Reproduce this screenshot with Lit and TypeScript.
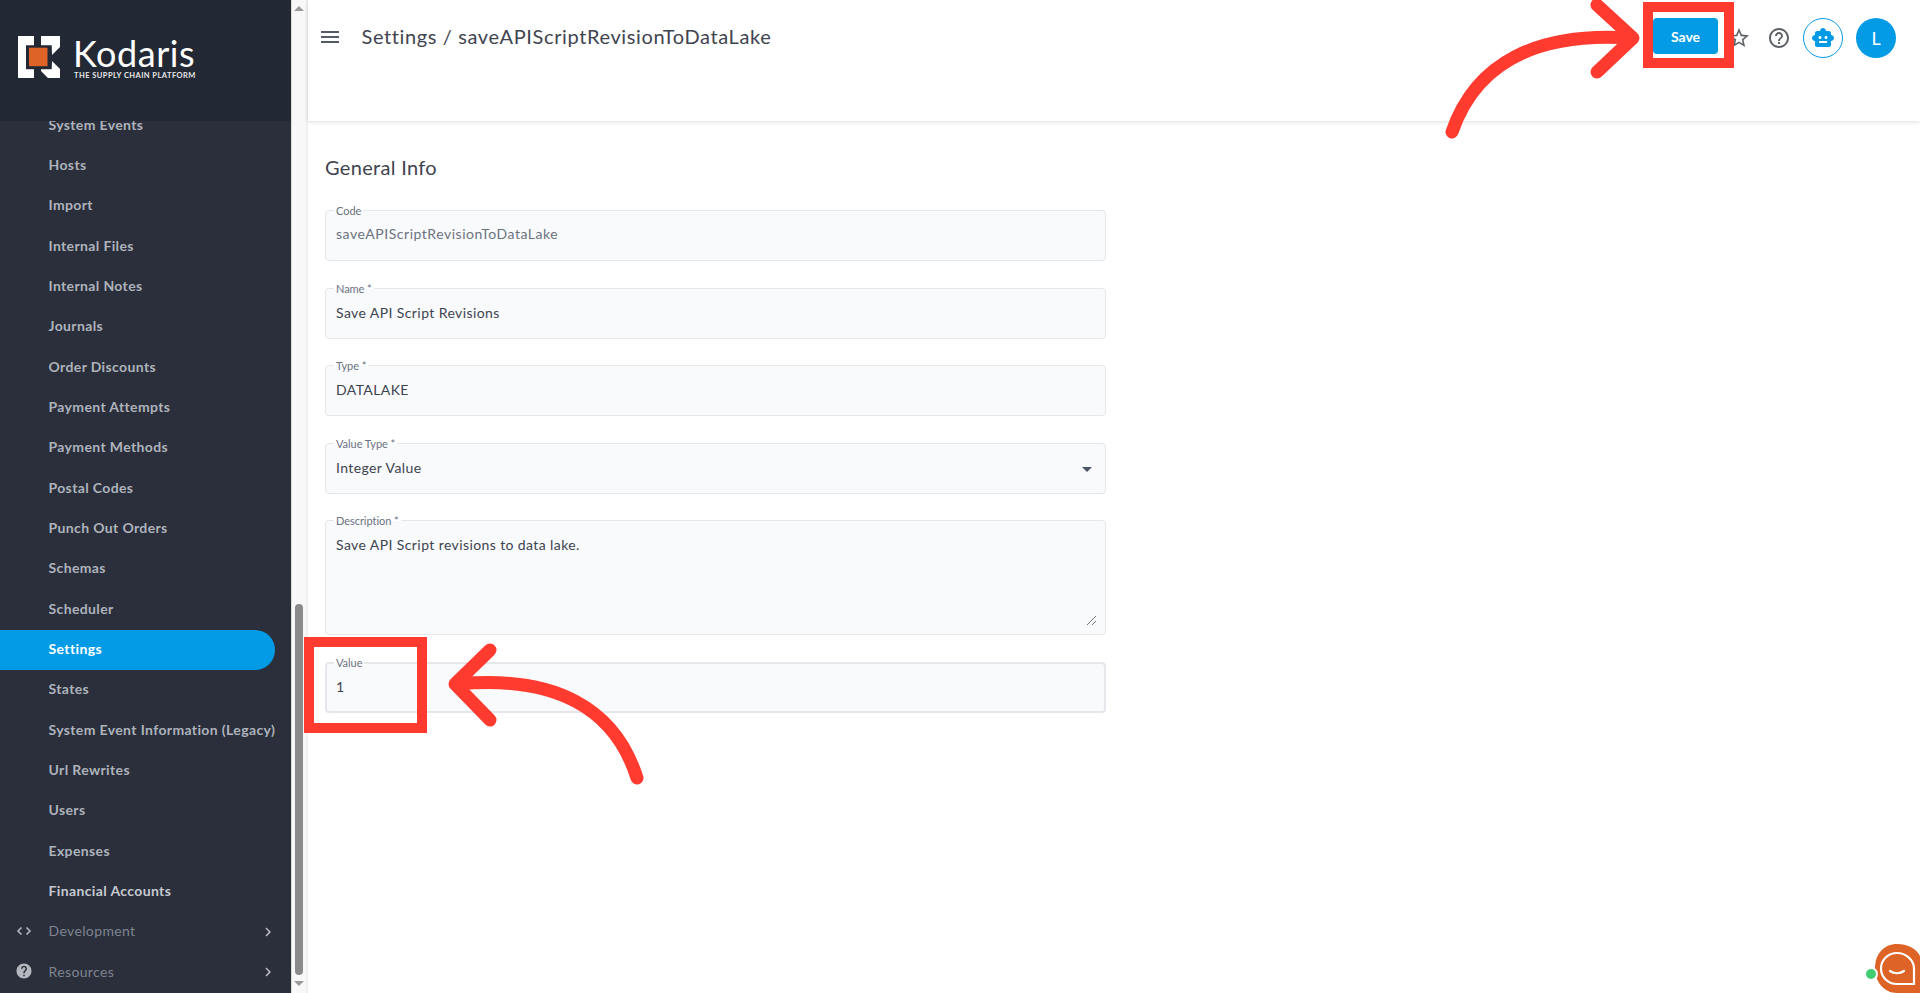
import { LitElement, html, css, svg } from "lit";
import { customElement } from "lit/decorators.js";

const NAV = ["System Events","Hosts","Import","Internal Files","Internal Notes","Journals","Order Discounts","Payment Attempts","Payment Methods","Postal Codes","Punch Out Orders","Schemas","Scheduler","Settings","States","System Event Information (Legacy)","Url Rewrites","Users","Expenses","Financial Accounts"];

const chevron = html`<svg class="chev" viewBox="0 0 24 24" width="18" height="18"><path fill="currentColor" d="M10 6 8.59 7.41 13.17 12l-4.58 4.59L10 18l6-6z"/></svg>`;

@customElement("app-root")
export class AppRoot extends LitElement {
  static styles = css`
    :host { display: block; height: 100vh; font-family: "Lato", "Noto Sans", sans-serif; color: #374151; }
    * { box-sizing: border-box; }
    .page { position: relative; display: flex; height: 993px; overflow: hidden; background: #fff; }
    .sidebar { width: 291px; flex: none; background: #2a2f3b; display: flex; flex-direction: column; overflow: hidden; }
    .brand { position: relative; z-index: 1; height: 121px; flex: none; background: #232934; display: flex; padding: 36px 0 0 18px; gap: 12px; }
    .brand-words { display: flex; flex-direction: column; color: #fff; margin-top: 0; }
    .brand-name { font-size: 36px; line-height: 34px; letter-spacing: 0.55px; font-weight: 400; }
    .brand-tag { font-size: 7.5px; line-height: 9px; font-weight: 700; letter-spacing: 0.45px; color: #e8e8e8; white-space: nowrap; margin: 1px 0 0 1px; }
    .nav { margin-top: -15.5px; display: flex; flex-direction: column; }
    .item { height: 40.33px; flex: none; display: flex; align-items: center; padding: 0 0 3px 48.5px; font-size: 14px; font-weight: 700; letter-spacing: .37px; color: #aeb3bb; white-space: nowrap; }
    .item.bright { color: #c6c9cf; }
    .item.active { width: 275px; background: #039be5; color: #fff; border-radius: 0 20px 20px 0; }
    .item.group { position: relative; color: #7f8490; font-weight: 400; padding-left: 0; }
    .gicon { width: 48.5px; padding-right: 1px; display: flex; justify-content: center; color: #b4b7bd; }
    .chev { position: absolute; left: 259px; top: 11px; color: #b9bcc2; }
    .gutter { width: 15px; flex: none; background: #f8f8f8; display: flex; flex-direction: column; align-items: center; border-left: 1px solid #dcdcdc; }
    .up { width: 0; height: 0; border: 5px solid transparent; border-top: 0; border-bottom: 5px solid #9a9a9a; margin-top: 6px; }
    .thumb { width: 8px; height: 371px; background: #8a8a8a; border-radius: 4px; margin-top: 593px; }
    .down { width: 0; height: 0; border: 5px solid transparent; border-bottom: 0; border-top: 5px solid #9a9a9a; margin-top: 6px; }
    .main { flex: 1; display: flex; flex-direction: column; min-width: 0; border-left: 2px solid #f0f0f0; }
    .top { height: 121px; flex: none; display: flex; padding: 18px 24px 0 8px; box-shadow: 0 1px 4px rgba(0,0,0,.14); background: #fff; align-items: flex-start; }
    .menu { width: 24px; height: 24px; margin: 7px 0 0 2px; color: #555b66; flex: none; }
    .title { font-size: 20px; line-height: 36px; color: #3f4450; margin-left: 19.5px; flex: 1; letter-spacing: .62px; white-space: nowrap; }
    .save { width: 65px; height: 36px; background: #039be5; color: #fff; border: 0; border-radius: 4px; font: 700 14px "Lato", sans-serif; padding: 0; }
    .ico { width: 24px; height: 24px; margin: 8px 0 0 16px; color: #5f6368; flex: none; }
    .ico.star { margin-left: 9px; }
    .bot { width: 40px; height: 40px; margin-left: 12px; border-radius: 50%; border: 1px solid #039be5; display: flex; align-items: center; justify-content: center; color: #039be5; flex: none; }
    .avatar { width: 40px; height: 40px; margin-left: 13px; border-radius: 50%; background: #039be5; color: #fff; display: flex; align-items: center; justify-content: center; font-size: 18px; flex: none; }
    .content { padding: 32px 0 0 17px; width: 798px; }
    h2 { margin: 0 0 29px; font-size: 20px; line-height: 28px; font-weight: 400; color: #3f4450; letter-spacing: .32px; }
    .fields { display: flex; flex-direction: column; gap: 26.5px; }
    .field { position: relative; height: 51px; background: #f9fafb; border: 1px solid #e5e7eb; border-radius: 4px; display: flex; align-items: center; padding: 0 10px 2px; font-size: 14px; letter-spacing: .4px; color: #3d4350; }
    .field.disabled { color: #6b7280; letter-spacing: .53px; padding-bottom: 4px; }
    .field.area { height: 115px; align-items: flex-start; padding-top: 15px; }
    .field.value { height: 51px; border-width: 2px; padding: 0 9px 2px; }
    .field.value label { left: 7px; top: -8px; }
    label { position: absolute; left: 8px; top: -7px; padding: 0 2px; font-size: 11px; line-height: 14px; letter-spacing: -.05px; color: #6b7280; background: linear-gradient(#fff 50%, #f9fafb 50%); }
    .caret { position: absolute; right: 13px; top: 23px; width: 0; height: 0; border: 5.5px solid transparent; border-bottom: 0; border-top: 5.5px solid #4b5563; }
    .grip { position: absolute; right: 9px; bottom: 9px; }
    .overlay { position: absolute; inset: 0; pointer-events: none; }
  `;

  field(label: string, value: string, cls = "", extra: unknown = "") {
    return html`<div class="field ${cls}"><label>${label}</label>${value}${extra}</div>`;
  }

  render() {
    return html`<div class="page">
      <aside class="sidebar">
        <div class="brand">
          <svg width="43" height="43" viewBox="19 37 43 43" style="flex:none">
            <path fill="#fff" d="M19 37h16v9.3h-8v24h8V79H19z"/>
            <path fill="#fff" d="M42 37h19v11l-8 8-.3-9.7H42zM42 70.300h10.700L53 62l8 8v9H49l-7-7z"/>
            <rect x="30" y="48.700" width="18.500" height="18.500" fill="#dd6326"/>
          </svg>
          <div class="brand-words"><span class="brand-name">Kodaris</span><span class="brand-tag">THE SUPPLY CHAIN PLATFORM</span></div>
        </div>
        <nav class="nav">
          ${NAV.map((n) => html`<div class="item ${n === "Settings" ? "active" : ""} ${n === "Financial Accounts" ? "bright" : ""}">${n}</div>`)}
          <div class="item group"><span class="gicon"><svg width="18" height="18" viewBox="0 0 18 18"><path d="M6.500 5.500 3 9l3.500 3.500M11.500 5.500 15 9l-3.500 3.500" fill="none" stroke="currentColor" stroke-width="1.600"/></svg></span>Development ${chevron}</div>
          <div class="item group"><span class="gicon"><svg width="18" height="18" viewBox="0 0 24 24"><path fill="currentColor" d="M12 2C6.480 2 2 6.480 2 12s4.480 10 10 10 10-4.480 10-10S17.520 2 12 2zm1 17h-2v-2h2v2zm2.070-7.750-.9.920C13.450 12.900 13 13.500 13 15h-2v-.5c0-1.100.45-2.100 1.170-2.830l1.240-1.260c.37-.36.59-.86.59-1.410 0-1.100-.9-2-2-2s-2 .9-2 2H8c0-2.210 1.790-4 4-4s4 1.790 4 4c0 .88-.36 1.680-.93 2.250z"/></svg></span>Resources ${chevron}</div>
        </nav>
      </aside>
      <div class="gutter"><div class="up"></div><div class="thumb"></div><div class="down"></div></div>
      <main class="main">
        <header class="top">
          <svg class="menu" viewBox="0 0 24 24"><path fill="currentColor" d="M3 18h18v-2H3v2zm0-5h18v-2H3v2zm0-7v2h18V6H3z"/></svg>
          <div class="title">Settings / saveAPIScriptRevisionToDataLake</div>
          <button class="save">Save</button>
          <svg class="ico star" viewBox="0 0 24 24"><path fill="currentColor" d="M22 9.240l-7.190-.62L12 2 9.190 8.630 2 9.240l5.460 4.730L5.820 21 12 17.270 18.180 21l-1.630-7.030L22 9.240zM12 15.400l-3.760 2.270 1-4.280-3.320-2.880 4.380-.38L12 6.100l1.710 4.040 4.380.38-3.320 2.880 1 4.280L12 15.400z"/></svg>
          <svg class="ico" viewBox="0 0 24 24"><path fill="currentColor" d="M11 18h2v-2h-2v2zm1-16C6.480 2 2 6.480 2 12s4.480 10 10 10 10-4.480 10-10S17.520 2 12 2zm0 18c-4.410 0-8-3.590-8-8s3.590-8 8-8 8 3.590 8 8-3.590 8-8 8zm0-14c-2.210 0-4 1.790-4 4h2c0-1.100.9-2 2-2s2 .9 2 2c0 2-3 1.750-3 5h2c0-2.250 3-2.500 3-5 0-2.210-1.790-4-4-4z"/></svg>
          <div class="bot"><svg width="24" height="24" viewBox="0 0 24 24"><path fill="currentColor" d="M20 9V7c0-1.100-.9-2-2-2h-3c0-1.660-1.340-3-3-3S9 3.340 9 5H6c-1.100 0-2 .9-2 2v2c-1.660 0-3 1.340-3 3s1.340 3 3 3v4c0 1.100.9 2 2 2h12c1.100 0 2-.9 2-2v-4c1.660 0 3-1.340 3-3s-1.340-3-3-3zM7.500 11.500c0-.83.67-1.500 1.500-1.500s1.500.67 1.500 1.500S9.830 13 9 13s-1.500-.67-1.500-1.500zM16 17H8v-2h8v2zm-1-4c-.83 0-1.500-.67-1.500-1.500S14.170 10 15 10s1.500.67 1.500 1.500S15.830 13 15 13z"/></svg></div>
          <div class="avatar">L</div>
        </header>
        <section class="content">
          <h2>General Info</h2>
          <div class="fields">
            ${this.field("Code", "saveAPIScriptRevisionToDataLake", "disabled")}
            ${this.field("Name *", "Save API Script Revisions")}
            ${this.field("Type *", "DATALAKE")}
            ${this.field("Value Type *", "Integer Value", "", html`<span class="caret"></span>`)}
            ${this.field("Description *", "Save API Script revisions to data lake.", "area", html`<svg class="grip" width="9" height="9" viewBox="0 0 9 9"><path d="M0 9 9 0M5 9l4-4" stroke="#777" stroke-width="1"/></svg>`)}
            ${this.field("Value", "1", "value")}
          </div>
        </section>
      </main>
      <svg class="overlay" width="1920" height="993" viewBox="0 0 1920 993">
        ${svg`
          <rect x="1648" y="7" width="81" height="56" fill="none" stroke="#ff3b30" stroke-width="10"/>
          <rect x="309" y="642" width="113" height="86" fill="none" stroke="#ff3b30" stroke-width="10"/>
          <g fill="none" stroke="#ff3b30" stroke-width="13" stroke-linecap="round" stroke-linejoin="round">
            <path d="M1452 132C1476 62 1538 32 1630 38"/>
            <path d="M1597 5 1633 38 1597 72"/>
            <path d="M637 778C615 708 555 675 458 684"/>
            <path d="M490 650 455 684 490 720"/>
          </g>
          <path fill="#dd6326" d="M1897 944c-13 0-22 10-22 24 0 14 9 25 22 25h23v-37c-4-8-13-12-23-12z"/>
          <path fill="#dd6326" stroke="#fff" stroke-width="2.200" d="M1897 953c-9 0-16 7-16 15.500s7 15.500 16 15.500h17v-15.500c0-8.500-8-15.500-17-15.500z"/>
          <path fill="none" stroke="#fff" stroke-width="2.200" stroke-linecap="round" d="M1890 971c4 3 10 3 14 0"/>
          <circle cx="1871" cy="974" r="7" fill="#fff"/>
          <circle cx="1871" cy="974" r="5" fill="#43cd72"/>
        `}
      </svg>
    </div>`;
  }
}
